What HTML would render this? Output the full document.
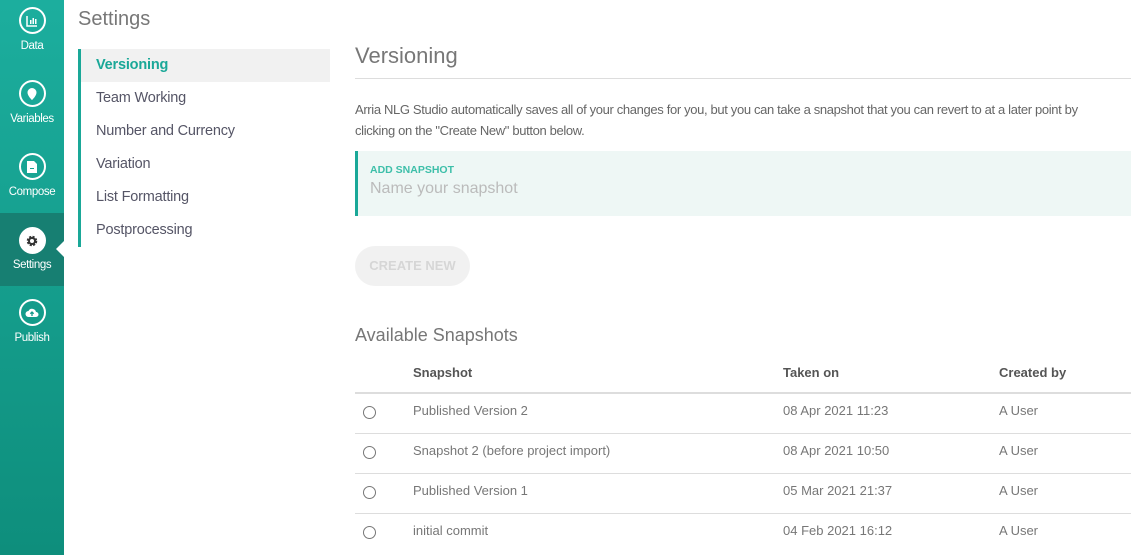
<!DOCTYPE html>
<html><head><style>
*{margin:0;padding:0;box-sizing:border-box}
body{width:1140px;height:555px;overflow:hidden;background:#fff;font-family:"Liberation Sans",sans-serif;color:#5a5a66;position:relative}
.side{position:absolute;left:0;top:0;width:64px;height:555px;background:linear-gradient(#1cae9e,#0e8e7c)}
.it{position:absolute;left:0;width:64px;height:73px;text-align:center;color:#fff;font-size:11.5px;letter-spacing:-0.4px}
.it .c{width:27px;height:27px;border:2px solid #fff;border-radius:50%;margin:7px auto 6px;display:flex;align-items:center;justify-content:center}
.act{background:#177f72}
.act .c{background:#fff}
.act:after{content:"";position:absolute;right:0;top:28px;border:8px solid transparent;border-right-color:#fff}
.ab{position:absolute}
</style></head><body>
<div class="side">
 <div class="it" style="top:0"><div class="c"><svg width="12" height="12"><path d="M1 1v10h10" stroke="#fff" stroke-width="1.5" fill="none"/><rect x="4" y="5" width="1.5" height="4" fill="#fff"/><rect x="6.5" y="3" width="1.5" height="6" fill="#fff"/><rect x="9" y="4" width="1.5" height="5" fill="#fff"/></svg></div>Data</div>
 <div class="it" style="top:73px"><div class="c"><svg width="12" height="14"><path d="M6 1a4.5 4.5 0 0 1 4.5 4.5C10.5 9 6 13 6 13S1.5 9 1.5 5.5A4.5 4.5 0 0 1 6 1z" fill="#fff"/></svg></div>Variables</div>
 <div class="it" style="top:146px"><div class="c"><svg width="10" height="12"><path d="M0 0h7l3 3v9H0z" fill="#fff"/><rect x="3" y="7" width="4" height="1" fill="#17a192"/></svg></div>Compose</div>
 <div class="it act" style="top:213px;height:73px"><div class="c" style="margin-top:14px;margin-bottom:5px"><svg width="12" height="12" viewBox="0 0 12 12"><circle cx="6" cy="6" r="4" fill="none" stroke="#333" stroke-width="2.5" stroke-dasharray="2 1.2"/><circle cx="6" cy="6" r="3" fill="none" stroke="#333" stroke-width="2"/></svg></div>Settings</div>
 <div class="it" style="top:292px"><div class="c"><svg width="14" height="11"><path d="M3.5 10a3 3 0 0 1 0-6 4 4 0 0 1 7.5 1 2.5 2.5 0 0 1 0 5z" fill="#fff"/><path d="M7 9V5M5.3 6.7L7 5l1.7 1.7" stroke="#139888" stroke-width="1.3" fill="none"/></svg></div>Publish</div>
</div>
<div class="ab" style="left:78px;top:8px;font-size:20px;color:#777">Settings</div>
<div class="ab" style="left:78px;top:49px;width:252px;height:198px;border-left:3px solid #1aa898">
 <div style="height:33px;background:#f1f1f1;color:#1aa898;font-weight:bold;font-size:14.5px;line-height:33px;padding-left:15px;letter-spacing:-0.2px">Versioning</div>
 <div style="font-size:14.5px;line-height:33px;padding-left:15px;color:#555566;letter-spacing:-0.2px">Team Working<br>Number and Currency<br>Variation<br>List Formatting<br>Postprocessing</div>
</div>
<div class="ab" style="left:355px;top:43px;font-size:22px;color:#777">Versioning</div>
<div class="ab" style="left:355px;top:78px;width:776px;height:1px;background:#ddd"></div>
<div class="ab" style="left:355px;top:99px;width:790px;font-size:13px;line-height:21px;color:#666;letter-spacing:-0.35px;white-space:nowrap">Arria NLG Studio automatically saves all of your changes for you, but you can take a snapshot that you can revert to at a later point by<br>clicking on the "Create New" button below.</div>
<div class="ab" style="left:355px;top:151px;width:776px;height:65px;background:#eef7f5;border-left:3px solid #1aa898">
 <div style="position:absolute;left:12px;top:13px;font-size:10.5px;font-weight:bold;color:#3dbfa9">ADD SNAPSHOT</div>
 <div style="position:absolute;left:12px;top:29px;font-size:16px;color:#bbb">Name your snapshot</div>
</div>
<div class="ab" style="left:355px;top:246px;width:115px;height:40px;border-radius:20px;background:#f1f1f1;color:#d6d6d6;font-size:13px;font-weight:bold;line-height:40px;text-align:center">CREATE NEW</div>
<div class="ab" style="left:355px;top:325px;font-size:18px;color:#777">Available Snapshots</div>
<div class="ab" style="left:355px;top:365px;width:776px;font-size:13px;font-weight:bold;color:#555">
 <span class="ab" style="left:58px">Snapshot</span><span class="ab" style="left:428px">Taken on</span><span class="ab" style="left:644px">Created by</span>
</div>
<div class="ab" style="left:355px;top:392px;width:776px;height:2px;background:#ddd"></div>
<div class="ab" style="left:355px;top:394px;width:776px;font-size:13px;color:#777">
 <div style="position:relative;height:40px;border-bottom:1px solid #ddd"><span class="ab" style="left:8px;top:12px;width:13px;height:13px;border:1px solid #777;border-radius:50%"></span><span class="ab" style="left:58px;top:9px">Published Version 2</span><span class="ab" style="left:428px;top:9px">08 Apr 2021 11:23</span><span class="ab" style="left:644px;top:9px">A User</span></div>
 <div style="position:relative;height:40px;border-bottom:1px solid #ddd"><span class="ab" style="left:8px;top:12px;width:13px;height:13px;border:1px solid #777;border-radius:50%"></span><span class="ab" style="left:58px;top:9px">Snapshot 2 (before project import)</span><span class="ab" style="left:428px;top:9px">08 Apr 2021 10:50</span><span class="ab" style="left:644px;top:9px">A User</span></div>
 <div style="position:relative;height:40px;border-bottom:1px solid #ddd"><span class="ab" style="left:8px;top:12px;width:13px;height:13px;border:1px solid #777;border-radius:50%"></span><span class="ab" style="left:58px;top:9px">Published Version 1</span><span class="ab" style="left:428px;top:9px">05 Mar 2021 21:37</span><span class="ab" style="left:644px;top:9px">A User</span></div>
 <div style="position:relative;height:40px"><span class="ab" style="left:8px;top:12px;width:13px;height:13px;border:1px solid #777;border-radius:50%"></span><span class="ab" style="left:58px;top:9px">initial commit</span><span class="ab" style="left:428px;top:9px">04 Feb 2021 16:12</span><span class="ab" style="left:644px;top:9px">A User</span></div>
</div>
</body></html>
